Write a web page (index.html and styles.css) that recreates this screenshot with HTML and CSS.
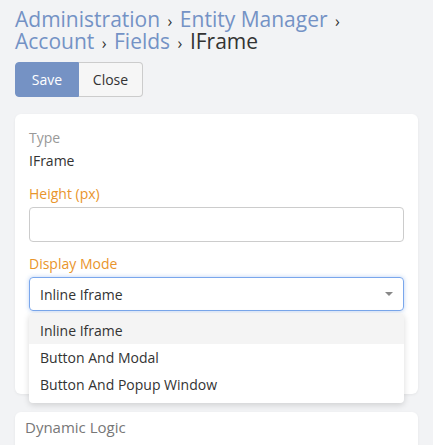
FILE: index.html
```html
<!DOCTYPE html>
<html>
<head>
<meta charset="utf-8">
<link rel="stylesheet" href="styles.css">
</head>
<body>
<div class="page">
  <h1 class="breadcrumb"><a class="crumb">Administration</a> <span class="sep">›</span> <a class="crumb">Entity Manager</a> <span class="sep">›</span> <a class="crumb">Account</a> <span class="sep">›</span> <a class="crumb">Fields</a> <span class="sep">›</span> <span class="current">IFrame</span></h1>
  <div class="btn-group">
    <button class="btn btn-primary">Save</button>
    <button class="btn btn-default">Close</button>
  </div>
  <div class="panel">
    <div class="field">
      <div class="label label-muted">Type</div>
      <div class="value">IFrame</div>
    </div>
    <div class="field">
      <div class="label label-req">Height (px)</div>
      <div class="input"></div>
    </div>
    <div class="field field-select">
      <div class="label label-req">Display Mode</div>
      <div class="select-wrap">
        <div class="select">
          <span>Inline Iframe</span>
          <span class="caret"></span>
        </div>
        <div class="dropdown">
          <div class="option active">Inline Iframe</div>
          <div class="option">Button And Modal</div>
          <div class="option">Button And Popup Window</div>
        </div>
      </div>
    </div>
    <div class="spacer"></div>
  </div>
  <div class="panel panel-second">
    <div class="panel-heading">Dynamic Logic</div>
  </div>
</div>
</body>
</html>
```
FILE: styles.css
```css
* { box-sizing: border-box; }
html, body { margin: 0; padding: 0; }
body {
  background: #f2f3f5;
  font-family: "Open Sans", "Noto Sans", sans-serif;
  color: #333;
  font-size: 14px;
  overflow: hidden;
  height: 445px;
}
.page { padding: 8px 15px 0 15px; }
.breadcrumb {
  margin: 0;
  font-size: 21px;
  line-height: 22px;
  font-weight: 400;
  color: #333;
}
.crumb { color: #7492c5; text-decoration: none; }
.sep { font-size: 16px; line-height: 1; color: #333; padding: 0 2px; }
.btn-group { display: flex; margin-top: 10px; }
.btn {
  font-family: inherit;
  font-size: 14px;
  height: 35px;
  width: 64px;
  padding: 0;
  border: 1px solid #ccc;
  margin: 0;
}
.btn-primary {
  background: #7592c4;
  border-color: #7592c4;
  color: #fff;
  border-radius: 4px 0 0 4px;
}
.btn-default {
  background: #f6f6f6;
  color: #333;
  border-left: none;
  border-radius: 0 4px 4px 0;
}
.panel {
  background: #fff;
  border-radius: 6px;
  margin-top: 17px;
  padding: 14px 14px 0 14px;
  box-shadow: 0 1px 3px rgba(0,0,0,0.06);
}
.field { margin-bottom: 12px; }
.label { line-height: 20px; margin-bottom: 3px; }
.label-muted { color: #999; }
.label-req { color: #e9952c; }
.value { line-height: 20px; color: #333; margin-bottom: 13px; }
.input {
  height: 35px;
  border: 1px solid #ccc;
  border-radius: 4px;
  background: #fff;
}
.field-select .label { margin-bottom: 3px; }
.select-wrap { position: relative; }
.select {
  height: 34px;
  border: 1px solid #7aa7ec;
  border-radius: 4px;
  box-shadow: 0 0 4px rgba(102,153,230,0.45);
  display: flex;
  align-items: center;
  justify-content: space-between;
  padding: 0 10px 0 10px;
  color: #333;
}
.caret {
  width: 0; height: 0;
  border-left: 4px solid transparent;
  border-right: 4px solid transparent;
  border-top: 4px solid #888;
}
.dropdown {
  position: absolute;
  left: 0; right: 0;
  top: calc(100% + 2px);
  background: #fff;
  border-radius: 4px;
  box-shadow: 0 2px 6px rgba(0,0,0,0.15);
  padding-bottom: 5px;
  z-index: 5;
}
.option { padding: 4px 11px; line-height: 19px; color: #333; }
.option.active { background: #f4f4f4; padding-top: 8px; border-radius: 4px 4px 0 0; }
.spacer { height: 71px; }
.panel-second {
  margin-top: 18px;
  padding: 5px 10px 10px 10px;
  height: 60px;
}
.panel-heading { color: #777; font-size: 15px; line-height: 20px; }
```
